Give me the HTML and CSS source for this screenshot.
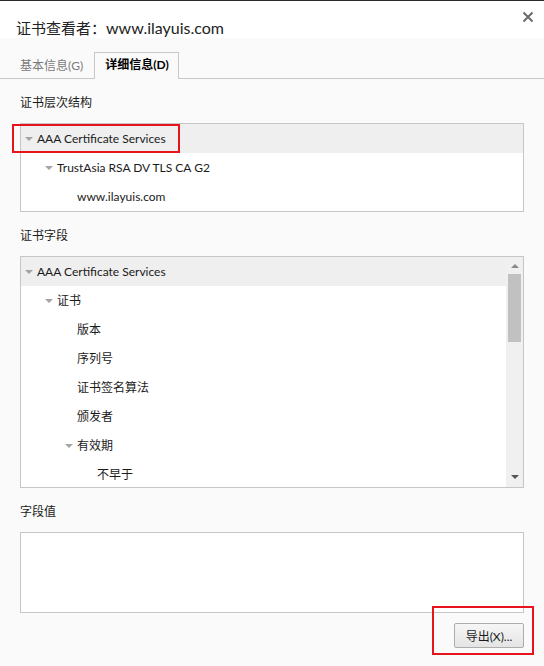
FILE: index.html
```html
<!DOCTYPE html>
<html lang="zh-CN">
<head>
<meta charset="utf-8">
<title>证书查看者</title>
<link rel="stylesheet" href="styles.css">
</head>
<body>
<div class="window">
  <div class="titlebar">
    <span class="title">证书查看者：<span class="host">www.ilayuis.com</span></span>
    <span class="close">
      <svg width="12" height="12" viewBox="0 0 12 12"><path d="M1.5 1.5 L10.5 10.5 M10.5 1.5 L1.5 10.5" stroke="#6b6b6b" stroke-width="2" fill="none"/></svg>
    </span>
  </div>
  <div class="tabs">
    <div class="tab">基本信息(G)</div>
    <div class="tab active">详细信息(D)</div>
  </div>
  <div class="panel">
    <div class="label">证书层次结构</div>
    <div class="box hier">
      <div class="row selected lvl0"><span class="arrow"></span>AAA Certificate Services</div>
      <div class="row lvl1"><span class="arrow"></span>TrustAsia RSA DV TLS CA G2</div>
      <div class="row lvl2"><span class="noarrow"></span>www.ilayuis.com</div>
    </div>
    <div class="label">证书字段</div>
    <div class="box fields">
      <div class="rows">
        <div class="row selected lvl0"><span class="arrow"></span>AAA Certificate Services</div>
        <div class="row lvl1"><span class="arrow"></span>证书</div>
        <div class="row lvl2"><span class="noarrow"></span>版本</div>
        <div class="row lvl2"><span class="noarrow"></span>序列号</div>
        <div class="row lvl2"><span class="noarrow"></span>证书签名算法</div>
        <div class="row lvl2"><span class="noarrow"></span>颁发者</div>
        <div class="row lvl2"><span class="arrow"></span>有效期</div>
        <div class="row lvl3"><span class="noarrow"></span>不早于</div>
      </div>
      <div class="scrollbar">
        <span class="sb-up"></span>
        <span class="sb-track"><span class="sb-thumb"></span></span>
        <span class="sb-down"></span>
      </div>
    </div>
    <div class="label">字段值</div>
    <div class="box value"></div>
    <div class="actions">
      <button class="btn">导出(X)...</button>
    </div>
  </div>
  <div class="mark mark-top"></div>
  <div class="mark mark-bottom"></div>
</div>
</body>
</html>
```
FILE: styles.css
```css
html, body {
  margin: 0;
  padding: 0;
}
body {
  width: 544px;
  height: 666px;
  overflow: hidden;
  background: #fafafa;
  font-family: "Lato", "Noto Sans CJK SC", sans-serif;
  font-size: 12px;
  color: #1a1a1a;
}
.window {
  position: relative;
  height: 666px;
  border-top: 1px solid #2a2a2a;
  box-sizing: border-box;
}
.titlebar {
  height: 37px;
  background: #ffffff;
  display: flex;
  align-items: flex-end;
  justify-content: space-between;
  padding: 0 10px 0 16px;
}
.title {
  font-size: 15px;
  line-height: 20px;
  padding-bottom: 0;
  color: #222;
}
.host {
  font-size: 16px;
}
.close {
  align-self: flex-start;
  margin-top: 10px;
  width: 12px;
  height: 12px;
  display: flex;
}
.tabs {
  height: 40px;
  border-bottom: 1px solid #c8c8c8;
  display: flex;
  align-items: flex-end;
  padding-left: 9px;
}
.tab {
  height: 25px;
  line-height: 24px;
  padding: 0 10px;
  border: 1px solid transparent;
  border-bottom: none;
  margin-bottom: -1px;
  color: #7a7a7a;
}
.tab.active {
  border-color: #c8c8c8;
  background: #fafafa;
  color: #000;
  font-weight: bold;
  height: 26px;
  padding: 0 9px 0 10px;
}
.panel {
  padding: 0 20px;
}
.label {
  padding: 16px 0 12px;
  line-height: 16px;
  color: #1a1a1a;
}
.box {
  border: 1px solid #c6c6c6;
  background: #ffffff;
}
.row {
  height: 29px;
  line-height: 29px;
  display: flex;
  align-items: center;
  white-space: nowrap;
  color: #1a1a1a;
}
.row.selected {
  background: #efefef;
}
.lvl0 { padding-left: 4px; }
.lvl1 { padding-left: 24px; }
.lvl2 { padding-left: 44px; }
.lvl3 { padding-left: 64px; }
.arrow, .noarrow {
  width: 12px;
  flex: none;
  height: 29px;
  position: relative;
}
.arrow::before {
  content: "";
  position: absolute;
  left: 0;
  top: 13px;
  border-left: 4px solid transparent;
  border-right: 4px solid transparent;
  border-top: 4px solid #a4a4a4;
}
.fields {
  height: 230px;
  display: flex;
  overflow: hidden;
}
.rows {
  flex: 1;
}
.scrollbar {
  width: 17px;
  flex: none;
  background: #f0f0f0;
  display: flex;
  flex-direction: column;
  align-items: center;
}
.sb-up, .sb-down {
  height: 17px;
  width: 17px;
  position: relative;
  flex: none;
}
.sb-up::before {
  content: "";
  position: absolute;
  left: 5px;
  top: 7px;
  border-left: 4px solid transparent;
  border-right: 4px solid transparent;
  border-bottom: 4px solid #8a8a8a;
}
.sb-down::before {
  content: "";
  position: absolute;
  left: 5px;
  top: 5px;
  border-left: 4px solid transparent;
  border-right: 4px solid transparent;
  border-top: 4px solid #555;
}
.sb-track {
  flex: 1;
  width: 17px;
  display: flex;
  justify-content: center;
}
.sb-thumb {
  width: 13px;
  height: 68px;
  margin-top: 0;
  background: #c1c1c1;
}
.value {
  height: 79px;
}
.actions {
  display: flex;
  justify-content: flex-end;
  padding-top: 10px;
}
.btn {
  width: 70px;
  height: 25px;
  font-family: inherit;
  font-size: 12px;
  color: #1a1a1a;
  border: 1px solid #adadad;
  border-radius: 2px;
  background: linear-gradient(#f6f6f6, #e4e4e4);
  padding: 0;
}
.mark {
  position: absolute;
  border: 2px solid #e8141c;
  box-sizing: border-box;
}
.mark-top {
  left: 12px;
  top: 123px;
  width: 168px;
  height: 29px;
}
.mark-bottom {
  left: 432px;
  top: 605px;
  width: 102px;
  height: 49px;
}
```
